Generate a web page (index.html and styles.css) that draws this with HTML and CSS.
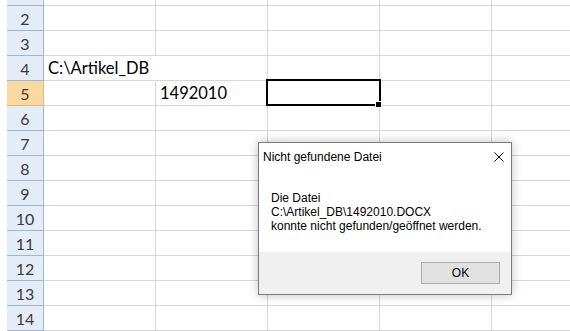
FILE: index.html
```html
<!DOCTYPE html>
<html lang="de">
<head>
    <meta charset="UTF-8">
    <title>Nicht gefundene Datei</title>
    <link rel="stylesheet" href="styles.css">
</head>
<body>

    <div class="sheet">
        <div class="row top">
            <div class="head"></div>
            <div class="cell"></div><div class="cell"></div><div class="cell"></div><div class="cell"></div><div class="cell"></div>
        </div>
        <div class="row">
            <div class="head">2</div>
            <div class="cell"></div><div class="cell"></div><div class="cell"></div><div class="cell"></div><div class="cell"></div>
        </div>
        <div class="row">
            <div class="head">3</div>
            <div class="cell"></div><div class="cell"></div><div class="cell"></div><div class="cell"></div><div class="cell"></div>
        </div>
        <div class="row">
            <div class="head">4</div>
            <div class="cell overflow">C:\Artikel_DB</div><div class="cell"></div><div class="cell"></div><div class="cell"></div><div class="cell"></div>
        </div>
        <div class="row">
            <div class="head selected">5</div>
            <div class="cell"></div><div class="cell">1492010</div><div class="cell active"></div><div class="cell"></div><div class="cell"></div>
        </div>
        <div class="row">
            <div class="head">6</div>
            <div class="cell"></div><div class="cell"></div><div class="cell"></div><div class="cell"></div><div class="cell"></div>
        </div>
        <div class="row">
            <div class="head">7</div>
            <div class="cell"></div><div class="cell"></div><div class="cell"></div><div class="cell"></div><div class="cell"></div>
        </div>
        <div class="row">
            <div class="head">8</div>
            <div class="cell"></div><div class="cell"></div><div class="cell"></div><div class="cell"></div><div class="cell"></div>
        </div>
        <div class="row">
            <div class="head">9</div>
            <div class="cell"></div><div class="cell"></div><div class="cell"></div><div class="cell"></div><div class="cell"></div>
        </div>
        <div class="row">
            <div class="head">10</div>
            <div class="cell"></div><div class="cell"></div><div class="cell"></div><div class="cell"></div><div class="cell"></div>
        </div>
        <div class="row">
            <div class="head">11</div>
            <div class="cell"></div><div class="cell"></div><div class="cell"></div><div class="cell"></div><div class="cell"></div>
        </div>
        <div class="row">
            <div class="head">12</div>
            <div class="cell"></div><div class="cell"></div><div class="cell"></div><div class="cell"></div><div class="cell"></div>
        </div>
        <div class="row">
            <div class="head">13</div>
            <div class="cell"></div><div class="cell"></div><div class="cell"></div><div class="cell"></div><div class="cell"></div>
        </div>
        <div class="row">
            <div class="head">14</div>
            <div class="cell"></div><div class="cell"></div><div class="cell"></div><div class="cell"></div><div class="cell"></div>
        </div>
    </div>

    <div class="dialog">
        <div class="titlebar">
            <span class="title">Nicht gefundene Datei</span>
            <svg class="close" width="10" height="10" viewBox="0 0 10 10">
                <path d="M0.5 0.5 L9.5 9.5 M9.5 0.5 L0.5 9.5" stroke="#000" stroke-width="1" fill="none"/>
            </svg>
        </div>
        <div class="message">
            Die Datei<br>
            C:\Artikel_DB\1492010.DOCX<br>
            konnte nicht gefunden/geöffnet werden.
        </div>
        <div class="footer">
            <button class="ok">OK</button>
        </div>
    </div>

</body>
</html>
```

FILE: styles.css
```css
body {
    margin: 0;
    background-color: #fff;
    font-family: Lato, "Liberation Sans", sans-serif;
    overflow: hidden;
}

.sheet {
    padding-left: 7px;
}

.row {
    display: flex;
    height: 25px;
}

.row.top {
    height: 6px;
}

.head {
    box-sizing: border-box;
    width: 37px;
    flex-shrink: 0;
    background-color: #e4ecf7;
    border-right: 1px solid #9eb6ce;
    border-bottom: 1px solid #9eb6ce;
    color: #3b3b3b;
    font-size: 16px;
    line-height: 25px;
    text-align: center;
}

.head.selected {
    background-color: #f9d9a0;
    border-right-color: #f2b460;
    border-bottom-color: #f2b460;
}

.cell {
    box-sizing: border-box;
    width: 112px;
    flex-shrink: 0;
    border-right: 1px solid #d4d6d9;
    border-bottom: 1px solid #d4d6d9;
    color: #000;
    font-size: 16.5px;
    line-height: 25px;
    padding-left: 4px;
    white-space: nowrap;
}

.cell:last-child {
    flex: 1;
    min-width: 0;
    border-right: none;
}

.cell.overflow {
    border-right-color: transparent;
}

.cell.active {
    position: relative;
}

.cell.active::after {
    content: "";
    position: absolute;
    left: -2px;
    top: -2px;
    right: -2px;
    bottom: -1px;
    border: 2px solid #000;
}

.cell.active::before {
    content: "";
    position: absolute;
    right: -3px;
    bottom: -3px;
    width: 5px;
    height: 5px;
    background-color: #000;
    border: 1px solid #fff;
    z-index: 1;
}

.dialog {
    position: absolute;
    left: 258px;
    top: 142px;
    width: 254px;
    box-sizing: border-box;
    border: 1px solid #7a7a7a;
    background-color: #fff;
    box-shadow: 0 0 10px rgba(0, 0, 0, 0.25);
    font-family: "Liberation Sans", sans-serif;
    font-size: 12px;
    color: #000;
}

.titlebar {
    display: flex;
    justify-content: space-between;
    align-items: center;
    height: 27px;
    padding: 0 7px 0 4px;
}

.message {
    padding: 21px 12px 0 12px;
    height: 61px;
    line-height: 14px;
}

.footer {
    display: flex;
    justify-content: flex-end;
    background-color: #f0f0f0;
    height: 42px;
    padding: 10px 11px 0 0;
    box-sizing: border-box;
}

.ok {
    width: 79px;
    height: 22px;
    background-color: #e1e1e1;
    border: 1px solid #adadad;
    font-family: "Liberation Sans", sans-serif;
    font-size: 12px;
    color: #000;
    padding: 0;
}
```
